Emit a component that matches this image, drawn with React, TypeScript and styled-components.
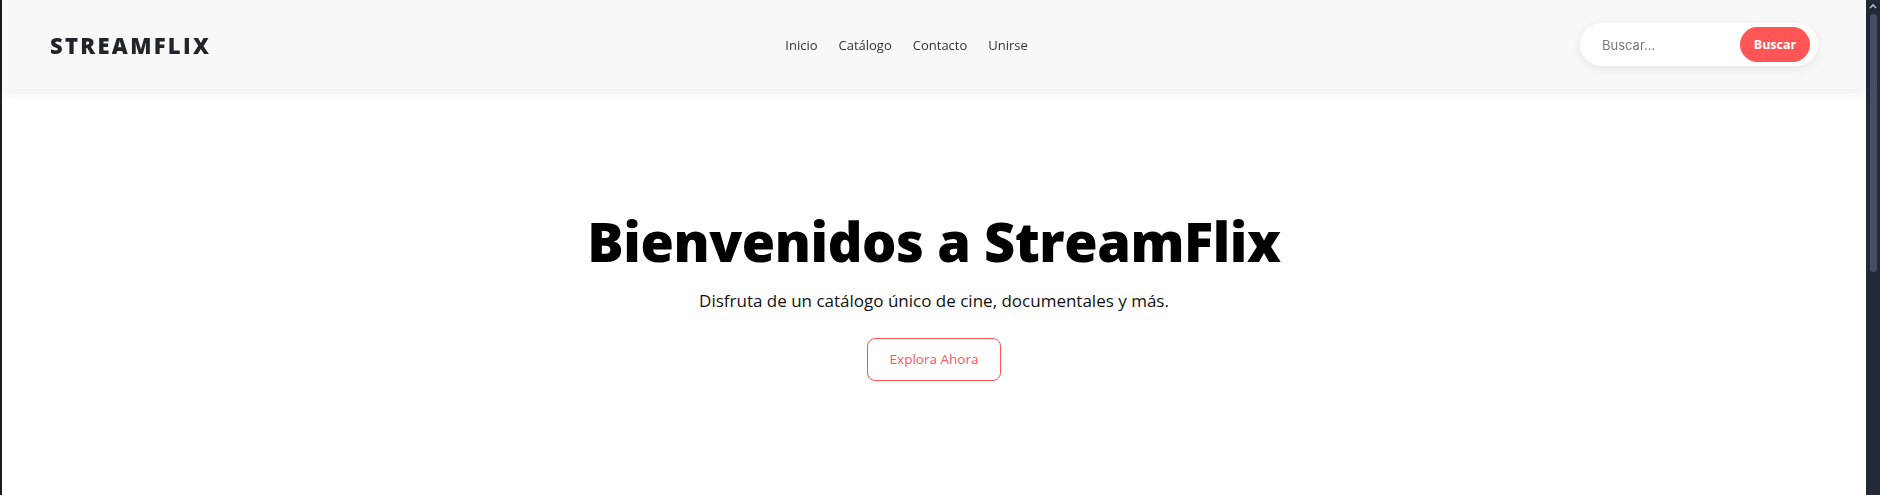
import React from "react";
import styled, { createGlobalStyle } from "styled-components";

const Global = createGlobalStyle`
  * { box-sizing: border-box; }
  html, body { margin: 0; padding: 0; background: #ffffff; overflow: hidden; }
  body { font-family: "Open Sans", "Noto Sans", sans-serif; }
`;

const Page = styled.div`
  min-height: 495px;
  margin-right: 14px;
  border-left: 2px solid #1d1d1d;
  background: #ffffff;
`;

const Header = styled.header`
  height: 89px;
  padding: 0 48px;
  display: flex;
  align-items: center;
  justify-content: space-between;
  background: #f8f8f8;
  box-shadow: 0 2px 12px rgba(0, 0, 0, 0.09);
  position: relative;
  z-index: 1;
`;

const Logo = styled.div`
  font-family: "Open Sans", sans-serif;
  font-weight: 800;
  font-size: 22px;
  letter-spacing: 2.3px;
  color: #212529;
`;

const Nav = styled.nav`
  display: flex;
  gap: 21px;
  margin-left: 22px;
`;

const NavLink = styled.a`
  font-family: "Open Sans", sans-serif;
  font-size: 13px;
  font-weight: 500;
  color: #333333;
  text-decoration: none;
`;

const Search = styled.form`
  width: 238px;
  height: 43px;
  padding: 4px 8px 4px 20px;
  display: flex;
  align-items: center;
  background: #ffffff;
  border-radius: 22px;
  box-shadow: 0 3px 10px rgba(0, 0, 0, 0.08);
`;

const SearchInput = styled.input`
  flex: 1;
  min-width: 0;
  border: none;
  outline: none;
  background: transparent;
  font-family: Inter, "Noto Sans", sans-serif;
  font-size: 13px;
  color: #333;
  &::placeholder { color: #7a7a7a; }
`;

const SearchButton = styled.button`
  width: 70px;
  height: 35px;
  border: none;
  border-radius: 18px;
  background: #ff5555;
  color: #ffffff;
  font-family: "Open Sans", sans-serif;
  font-weight: 700;
  font-size: 12.5px;
  cursor: pointer;
`;

const Hero = styled.section`
  padding-top: 120px;
  display: flex;
  flex-direction: column;
  align-items: center;
  text-align: center;
`;

const Title = styled.h1`
  margin: 0;
  font-family: "Open Sans", sans-serif;
  font-weight: 800;
  font-size: 54px;
  line-height: 1.2;
  letter-spacing: -0.4px;
  color: #000000;
`;

const Subtitle = styled.p`
  margin: 13px 0 0;
  font-family: "Open Sans", sans-serif;
  font-size: 17px;
  line-height: 27px;
  color: #111111;
`;

const OutlineButton = styled.button`
  margin-top: 24px;
  width: 134px;
  height: 43px;
  border: 1px solid #ff5555;
  border-radius: 8px;
  background: #ffffff;
  color: #ff5555;
  font-family: "Open Sans", sans-serif;
  font-size: 13.5px;
  font-weight: 500;
  cursor: pointer;
`;

const ScrollTrack = styled.div`
  position: fixed;
  top: 0;
  right: 0;
  width: 14px;
  height: 100vh;
  background: #252836;
`;

const ScrollThumb = styled.div`
  position: absolute;
  top: 14px;
  left: 4px;
  width: 7px;
  height: 258px;
  border-radius: 4px;
  background: #4a4d68;
`;

const ScrollArrow = styled.svg`
  position: absolute;
  top: 3px;
  left: 3px;
`;

export default function App() {
  return (
    <>
      <Global />
      <Page>
        <Header>
          <Logo>STREAMFLIX</Logo>
          <Nav>
            <NavLink href="#">Inicio</NavLink>
            <NavLink href="#">Catálogo</NavLink>
            <NavLink href="#">Contacto</NavLink>
            <NavLink href="#">Unirse</NavLink>
          </Nav>
          <Search onSubmit={(e) => e.preventDefault()}>
            <SearchInput placeholder="Buscar..." />
            <SearchButton type="submit">Buscar</SearchButton>
          </Search>
        </Header>
        <Hero>
          <Title>Bienvenidos a StreamFlix</Title>
          <Subtitle>Disfruta de un catálogo único de cine, documentales y más.</Subtitle>
          <OutlineButton>Explora Ahora</OutlineButton>
        </Hero>
      </Page>
      <ScrollTrack>
        <ScrollArrow width="8" height="6" viewBox="0 0 8 6">
          <path d="M1 5 L4 2 L7 5" stroke="#b8b8c4" strokeWidth="1.6" fill="none" />
        </ScrollArrow>
        <ScrollThumb />
      </ScrollTrack>
    </>
  );
}
